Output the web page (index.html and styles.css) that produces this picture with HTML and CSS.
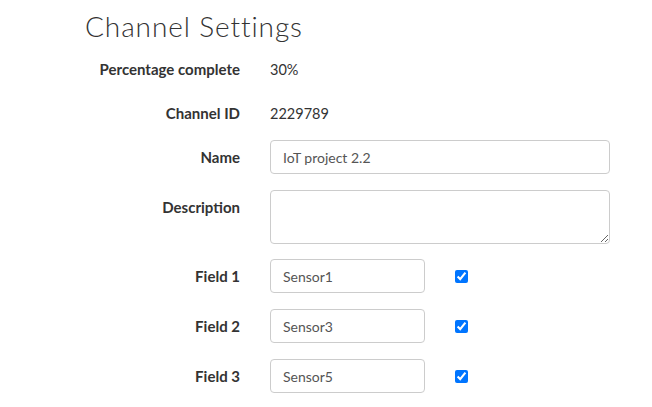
FILE: index.html
```html
<!DOCTYPE html>
<html lang="en">
<head>
<meta charset="utf-8">
<title>Channel Settings</title>
<link rel="stylesheet" href="styles.css">
</head>
<body>
<div class="page">
  <h1 class="title">Channel Settings</h1>
  <form class="form">
    <div class="row row-text">
      <label class="label">Percentage complete</label>
      <div class="value">30%</div>
    </div>
    <div class="row row-text">
      <label class="label">Channel ID</label>
      <div class="value">2229789</div>
    </div>
    <div class="row row-name">
      <label class="label">Name</label>
      <input class="input input-wide" type="text" value="IoT project 2.2">
    </div>
    <div class="row row-desc">
      <label class="label label-top">Description</label>
      <textarea class="input textarea"></textarea>
    </div>
    <div class="row row-field">
      <label class="label">Field 1</label>
      <input class="input input-field" type="text" value="Sensor1">
      <input class="check" type="checkbox" checked>
    </div>
    <div class="row row-field">
      <label class="label">Field 2</label>
      <input class="input input-field" type="text" value="Sensor3">
      <input class="check" type="checkbox" checked>
    </div>
    <div class="row row-field">
      <label class="label">Field 3</label>
      <input class="input input-field" type="text" value="Sensor5">
      <input class="check" type="checkbox" checked>
    </div>
  </form>
</div>
</body>
</html>
```
FILE: styles.css
```css
html, body {
  margin: 0;
  padding: 0;
  background: #ffffff;
}
body {
  font-family: "Lato", "Open Sans", sans-serif;
  color: #333333;
}
.page {
  padding: 9px 0 0 85px;
}
.title {
  margin: 0 0 9px 0;
  font-family: "Lato", sans-serif;
  font-weight: 300;
  font-size: 28px;
  line-height: 34px;
  letter-spacing: 0.9px;
  color: #333333;
}
.form {
  display: flex;
  flex-direction: column;
}
.row {
  display: flex;
  align-items: center;
  min-height: 34px;
}
.row-text {
  margin-bottom: 10px;
}
.row-name {
  margin-bottom: 16px;
}
.row-desc {
  align-items: flex-start;
  margin-bottom: 15px;
}
.row-field {
  margin-bottom: 16px;
}
.label {
  width: 155px;
  flex: none;
  text-align: right;
  font-weight: 700;
  font-size: 15px;
  color: #333333;
  margin-right: 30px;
}
.label-top {
  padding-top: 8px;
}
.value {
  font-size: 14.5px;
  color: #333333;
}
.input {
  box-sizing: border-box;
  height: 34px;
  border: 1px solid #cccccc;
  border-radius: 4px;
  padding: 0 12px;
  font-family: "Lato", "Open Sans", sans-serif;
  font-size: 14px;
  color: #555555;
  background: #ffffff;
  margin: 0;
}
.input-wide {
  width: 340px;
}
.textarea {
  width: 340px;
  height: 54px;
  padding: 6px 12px;
}
.input-field {
  width: 155px;
}
.check {
  width: 13px;
  height: 13px;
  margin: 0 0 0 30px;
  accent-color: #0075ff;
}
```
